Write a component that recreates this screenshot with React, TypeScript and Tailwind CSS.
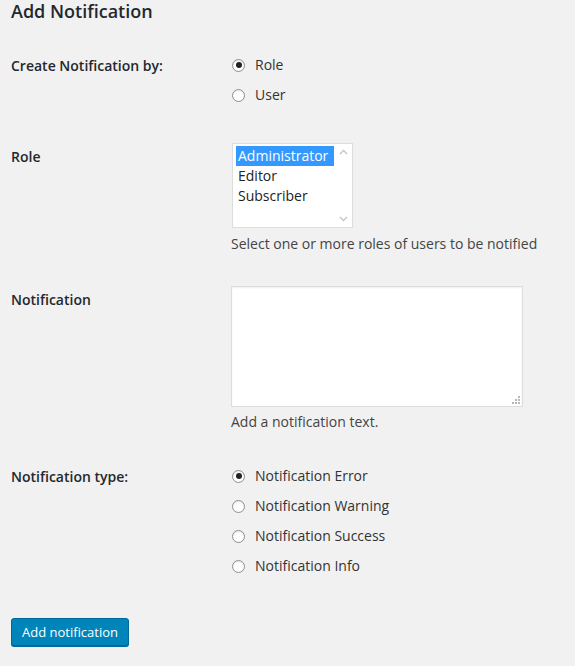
import { useState } from "react";

const ROLES = ["Administrator", "Editor", "Subscriber"];
const TYPES = [
  "Notification Error",
  "Notification Warning",
  "Notification Success",
  "Notification Info",
];

function Radio({ checked, label }: { checked: boolean; label: string }) {
  return (
    <label className="flex h-[30px] items-center">
      <span className="ml-[1px] flex h-[13px] w-[13px] items-center justify-center rounded-full border border-[#8c8f94] bg-white shadow-[inset_0_1px_2px_rgba(0,0,0,0.1)]">
        {checked ? (
          <span className="h-[6px] w-[6px] rounded-full bg-[#222]" />
        ) : null}
      </span>
      <span className="ml-[10px] text-[14px] leading-[18px] text-[#333]">
        {label}
      </span>
    </label>
  );
}

export default function App() {
  const [by] = useState("Role");
  const [type] = useState(TYPES[0]);

  return (
    <div
      className="min-h-[666px] bg-[#f1f1f1] pl-[11px] text-[#23282d]"
      style={{ fontFamily: '"Open Sans", "Noto Sans", sans-serif' }}
    >
      <h1 className="text-[18px] font-semibold leading-[23px]">
        Add Notification
      </h1>

      <div className="mt-[14px] grid grid-cols-[220px_1fr]">
        {/* Create Notification by */}
        <div className="pt-[20px] text-[14px] font-semibold leading-[18px]">
          Create Notification by:
        </div>
        <div className="pt-[13px] pb-[18px]">
          {["Role", "User"].map((v) => (
            <Radio key={v} checked={v === by} label={v} />
          ))}
        </div>

        {/* Role */}
        <div className="pt-[20px] text-[14px] font-semibold leading-[18px]">
          Role
        </div>
        <div className="pt-[15px] pb-[17px]">
          <div className="ml-[1px] flex h-[85px] w-[121px] border border-[#ddd] bg-white">
            <div className="flex-1 pt-[2px] pl-[3px]">
              {ROLES.map((r, i) => (
                <div
                  key={r}
                  className={`h-[20px] pl-[2px] text-[14px] leading-[20px] ${
                    i === 0 ? "bg-[#3399ff] text-white" : "text-[#222]"
                  }`}
                >
                  {r}
                </div>
              ))}
            </div>
            <div className="flex w-[18px] flex-col items-center justify-between py-[5px] text-[#c4c4c4]">
              <svg width="9" height="6" viewBox="0 0 9 6" fill="none">
                <path d="M1 5L4.5 1.5L8 5" stroke="currentColor" strokeWidth="1.3" />
              </svg>
              <svg width="9" height="6" viewBox="0 0 9 6" fill="none">
                <path d="M1 1L4.5 4.5L8 1" stroke="currentColor" strokeWidth="1.3" />
              </svg>
            </div>
          </div>
          <p className="mt-[6px] text-[14px] leading-[20px] text-[#444]">
            Select one or more roles of users to be notified
          </p>
        </div>

        {/* Notification */}
        <div className="pt-[20px] text-[14px] font-semibold leading-[18px]">
          Notification
        </div>
        <div className="pt-[15px] pb-[16px]">
          <div className="relative w-[292px]">
            <textarea
              className="block h-[121px] w-[292px] resize-none border border-[#ddd] bg-white shadow-[inset_0_1px_2px_rgba(0,0,0,0.07)] outline-none"
              defaultValue=""
            />
            {/* poignée de redimensionnement en pointillés */}
            <svg
              className="absolute right-[3px] bottom-[3px]"
              width="8"
              height="8"
              viewBox="0 0 8 8"
              fill="#b8b8b8"
            >
              <rect x="6" y="0" width="2" height="2" />
              <rect x="3" y="3" width="2" height="2" />
              <rect x="6" y="3" width="2" height="2" />
              <rect x="0" y="6" width="2" height="2" />
              <rect x="3" y="6" width="2" height="2" />
              <rect x="6" y="6" width="2" height="2" />
            </svg>
          </div>
          <p className="mt-[5px] text-[14px] leading-[20px] text-[#444]">
            Add a notification text.
          </p>
        </div>

        {/* Notification type */}
        <div className="pt-[20px] text-[14px] font-semibold leading-[18px]">
          Notification type:
        </div>
        <div className="pt-[13px]">
          {TYPES.map((t) => (
            <Radio key={t} checked={t === type} label={t} />
          ))}
        </div>
      </div>

      <button
        type="button"
        className="mt-[37px] h-[28px] rounded-[3px] border border-[#006799] bg-[#0085ba] px-[10px] text-[13px] leading-[26px] text-white shadow-[0_1px_0_#006799]"
      >
        Add notification
      </button>
    </div>
  );
}
